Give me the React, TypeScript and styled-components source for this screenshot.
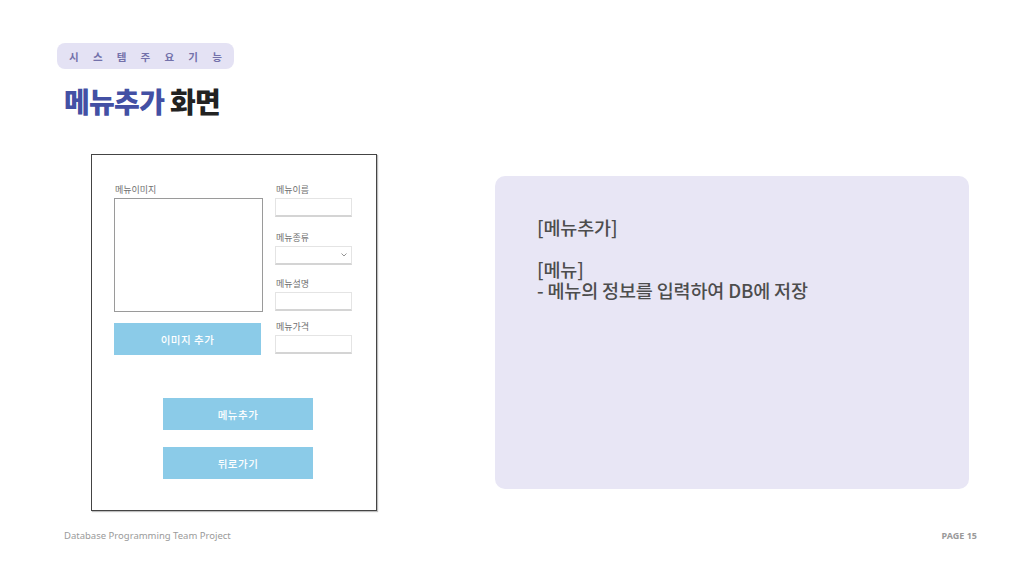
import React from "react";
import styled, { createGlobalStyle } from "styled-components";

const GlobalStyle = createGlobalStyle`
  html, body {
    margin: 0;
    padding: 0;
    background: #ffffff;
  }
  body {
    font-family: "Noto Sans CJK KR", "Noto Sans", sans-serif;
  }
`;

const Page = styled.div`
  width: 1024px;
  height: 576px;
  display: flex;
  flex-direction: column;
  box-sizing: border-box;
  overflow: hidden;
`;

const Header = styled.div`
  padding: 43px 0 0 57px;
  height: 154px;
  box-sizing: border-box;
  flex-shrink: 0;
`;

const Tag = styled.div`
  width: 177px;
  height: 26px;
  border-radius: 8px;
  background: #e4e2f4;
  display: flex;
  align-items: center;
  justify-content: space-around;
  padding: 0 5px;
  box-sizing: border-box;
  font-size: 10.5px;
  font-weight: 700;
  color: #7371aa;
`;

const Title = styled.h1`
  margin: 14px 0 0 7px;
  font-size: 28px;
  font-weight: 900;
  line-height: 36px;
  letter-spacing: -0.7px;
  color: #222222;
`;

const Accent = styled.span`
  color: #4350a4;
`;

const Main = styled.div`
  flex: 1;
  display: flex;
  align-items: flex-start;
  padding-left: 91px;
  gap: 118px;
`;

const FormPanel = styled.div`
  width: 286px;
  height: 357px;
  border: 1px solid #444;
  box-shadow: 1px 1px 1px rgba(0, 0, 0, 0.25);
  box-sizing: border-box;
  padding: 30px 0 0 22px;
  display: flex;
  flex-direction: column;
`;

const TopRow = styled.div`
  display: flex;
  gap: 12px;
`;

const LeftCol = styled.div`
  width: 149px;
  display: flex;
  flex-direction: column;
`;

const RightCol = styled.div`
  width: 77px;
  display: flex;
  flex-direction: column;
`;

const Label = styled.div<{ $top?: number }>`
  font-size: 9px;
  line-height: 10px;
  color: #707070;
  margin-top: ${(p) => p.$top ?? 0}px;
  margin-bottom: 3px;
  padding-left: 1px;
`;

const ImageBox = styled.div`
  height: 114px;
  border: 1px solid #9a9a9a;
  box-sizing: border-box;
  margin-bottom: 11px;
`;

const FlatButton = styled.div<{ $width: number }>`
  width: ${(p) => p.$width}px;
  height: 32px;
  background: #8bcbe8;
  color: #ffffff;
  font-size: 10.5px;
  font-weight: 500;
  display: flex;
  align-items: center;
  justify-content: center;
  letter-spacing: 0.5px;
`;

const Input = styled.div`
  height: 19px;
  border: 1px solid #e4e4e4;
  border-bottom: 2px solid #d4d4d4;
  box-sizing: border-box;
  position: relative;
  background: #fff;
`;

const Chevron = styled.svg`
  position: absolute;
  right: 4px;
  top: 6px;
`;

const BottomButtons = styled.div`
  display: flex;
  flex-direction: column;
  gap: 17px;
  margin: 43px 0 0 49px;
`;

const InfoCard = styled.div`
  margin-top: 22px;
  width: 474px;
  height: 313px;
  border-radius: 10px;
  background: #e8e6f5;
  box-sizing: border-box;
  padding: 41px 0 0 42px;
  font-size: 18.5px;
  line-height: 21px;
  font-weight: 500;
  color: #4d4d4d;
  letter-spacing: -0.15px;
`;

const Line = styled.div<{ $gap?: number }>`
  margin-top: ${(p) => p.$gap ?? 0}px;
`;

const Footer = styled.div`
  height: 46px;
  flex-shrink: 0;
  display: flex;
  justify-content: space-between;
  padding: 0 47px 0 64px;
  font-family: "Noto Sans", "Open Sans", sans-serif;
  font-size: 9.5px;
  line-height: 12px;
  color: #9a9a9a;
`;

const Credit = styled.span`
  letter-spacing: 0;
`;

const PageNo = styled.span`
  font-weight: 700;
  font-size: 9px;
`;

export default function App() {
  const tagLetters = ["시", "스", "템", "주", "요", "기", "능"];
  return (
    <Page>
      <GlobalStyle />
      <Header>
        <Tag>
          {tagLetters.map((c, i) => (
            <span key={i}>{c}</span>
          ))}
        </Tag>
        <Title>
          <Accent>메뉴추가</Accent> 화면
        </Title>
      </Header>
      <Main>
        <FormPanel>
          <TopRow>
            <LeftCol>
              <Label>메뉴이미지</Label>
              <ImageBox />
              <FlatButton $width={147}>이미지 추가</FlatButton>
            </LeftCol>
            <RightCol>
              <Label>메뉴이름</Label>
              <Input />
              <Label $top={16}>메뉴종류</Label>
              <Input>
                <Chevron width="6" height="4" viewBox="0 0 6 4">
                  <path d="M0.5 0.5 L3 3 L5.5 0.5" fill="none" stroke="#888" strokeWidth="0.9" />
                </Chevron>
              </Input>
              <Label $top={14}>메뉴설명</Label>
              <Input />
              <Label $top={11}>메뉴가격</Label>
              <Input />
            </RightCol>
          </TopRow>
          <BottomButtons>
            <FlatButton $width={150}>메뉴추가</FlatButton>
            <FlatButton $width={150}>뒤로가기</FlatButton>
          </BottomButtons>
        </FormPanel>
        <InfoCard>
          <Line>[메뉴추가]</Line>
          <Line $gap={21}>[메뉴]</Line>
          <Line>- 메뉴의 정보를 입력하여 DB에 저장</Line>
        </InfoCard>
      </Main>
      <Footer>
        <Credit>Database Programming Team Project</Credit>
        <PageNo>PAGE 15</PageNo>
      </Footer>
    </Page>
  );
}
